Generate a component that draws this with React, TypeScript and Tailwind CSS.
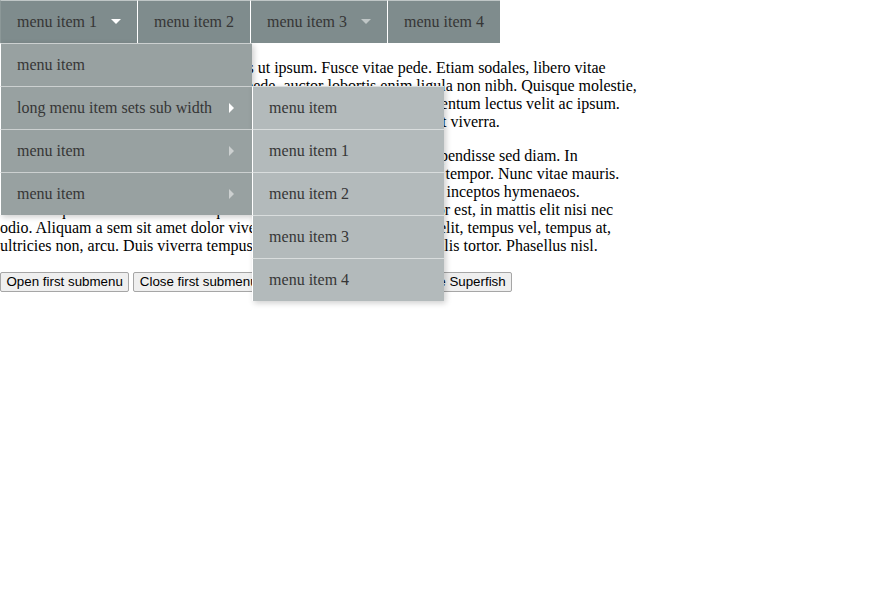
import React from "react";

type Item = { label: string; arrow?: "on" | "off"; children?: Item[] };

const menu: Item[] = [
  {
    label: "menu item 1",
    arrow: "on",
    children: [
      { label: "menu item" },
      {
        label: "long menu item sets sub width",
        arrow: "on",
        children: [
          { label: "menu item" },
          { label: "menu item 1" },
          { label: "menu item 2" },
          { label: "menu item 3" },
          { label: "menu item 4" },
        ],
      },
      { label: "menu item", arrow: "off" },
      { label: "menu item", arrow: "off" },
    ],
  },
  { label: "menu item 2" },
  { label: "menu item 3", arrow: "off" },
  { label: "menu item 4" },
];

const para1 = [
  "Lorem ipsum dolor sit amet, Nam lacus ut ipsum. Fusce vitae pede. Etiam sodales, libero vitae",
  "Nunc dignissim eleifend egestas, ante pede, auctor lobortis enim ligula non nibh. Quisque molestie,",
  "Vestibulum ante ipsum primis in faucibus orci luctus et posuere fermentum lectus velit ac ipsum.",
  "Donec ac magna. Integer eget arcu sed massa tempus, quam nisi amet viverra.",
];

const para2 = [
  "Curabitur pretium tincidunt lacus. Nulla gravida orci a odio. Sed Suspendisse sed diam. In",
  "Vivamus consectetuer risus et Maecenas aliquet mollis lectus semper tempor. Nunc vitae mauris.",
  "Class aptent taciti sociosqu ad litora torquent, per conubia nostra, per inceptos hymenaeos.",
  "Pellentesque habitant morbi tristique senectus et netus egestas, tempor est, in mattis elit nisi nec",
  "odio. Aliquam a sem sit amet dolor viverra imperdiet. Donec risus, velit, tempus vel, tempus at,",
  "ultricies non, arcu. Duis viverra tempus consequat eu, porta quis, mollis tortor. Phasellus nisl.",
];

function DownArrow({ on }: { on: boolean }) {
  return (
    <span
      className={
        "absolute right-[16px] top-1/2 mt-[-3px] h-0 w-0 border-[5px] border-x-transparent border-b-transparent " +
        (on ? "border-t-white" : "border-t-white/50")
      }
    />
  );
}

function RightArrow({ on }: { on: boolean }) {
  return (
    <span
      className={
        "absolute right-[16px] top-1/2 mr-[-3px] mt-[-5px] h-0 w-0 border-[5px] border-y-transparent border-r-transparent " +
        (on ? "border-l-white" : "border-l-white/50")
      }
    />
  );
}

function SubMenu({ items, level }: { items: Item[]; level: number }) {
  const bg = level === 1 ? "bg-[#98a1a1]" : "bg-[#b3babb]";
  const pos = level === 1 ? "left-0 top-full" : "left-full top-0";
  return (
    <ul className={`absolute ${pos} w-max min-w-[192px] shadow-[2px_2px_6px_rgba(0,0,0,0.2)]`}>
      {items.map((it, i) => (
        <li key={i} className={`relative ${bg}`}>
          <a
            className={
              "relative block whitespace-nowrap border-l border-t border-l-white border-t-white/50 py-[12px] pl-[16px] leading-[18px] text-[#363636] " +
              (it.arrow ? "pr-[40px]" : "pr-[16px]")
            }
          >
            {it.label}
            {it.arrow && <RightArrow on={it.arrow === "on"} />}
          </a>
          {it.children && <SubMenu items={it.children} level={level + 1} />}
        </li>
      ))}
    </ul>
  );
}

export default function App() {
  return (
    <div className="min-h-[605px] bg-white font-['Liberation_Serif','Times_New_Roman',serif] text-[16px] text-black">
      <nav className="relative z-10 h-[43px]">
        <ul className="flex">
          {menu.map((it, i) => (
            <li key={i} className="relative bg-[#7f8c8d]">
              <a
                className={
                  "relative block whitespace-nowrap border-l border-t border-t-white/50 py-[12px] pl-[16px] leading-[18px] text-[#363636] " +
                  (i === 0 ? "border-l-[#8c9898] " : "border-l-white ") +
                  (it.arrow ? "pr-[40px]" : "pr-[16px]")
                }
              >
                {it.label}
                {it.arrow && <DownArrow on={it.arrow === "on"} />}
              </a>
              {it.children && <SubMenu items={it.children} level={1} />}
            </li>
          ))}
        </ul>
      </nav>

      <p className="mt-[16px] whitespace-nowrap leading-[18px]">
        {para1.map((l, i) => (
          <span key={i} className="block">
            {l}
          </span>
        ))}
      </p>
      <p className="mt-[16px] whitespace-nowrap leading-[18px]">
        {para2.map((l, i) => (
          <span key={i} className="block">
            {l}
          </span>
        ))}
      </p>

      <div className="mt-[17px] flex gap-[4px] font-['Liberation_Sans',Arial,sans-serif] text-[13.33px]">
        {["Open first submenu", "Close first submenu", "Destroy Superfish", "Initialise Superfish"].map((b) => (
          <button
            key={b}
            className="h-[20px] rounded-[2px] border border-[#a6a6a6] bg-[#efefef] px-[5.5px] leading-[16px] text-black"
          >
            {b}
          </button>
        ))}
      </div>
    </div>
  );
}
